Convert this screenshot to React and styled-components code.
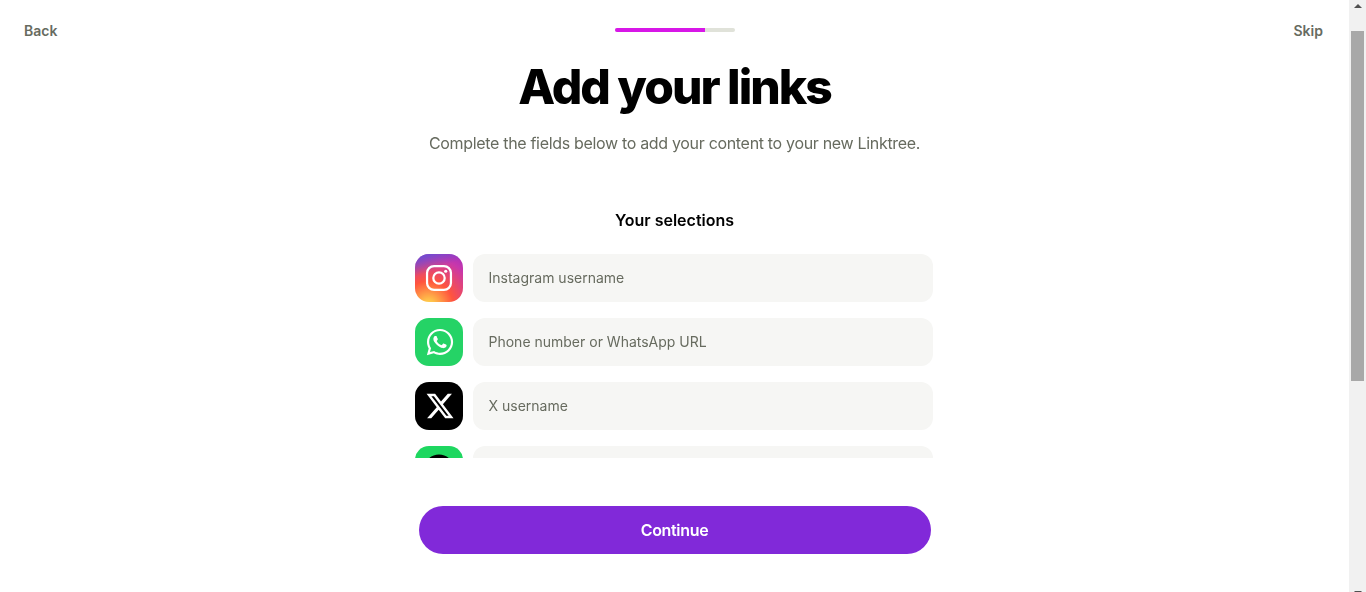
import styled, { createGlobalStyle } from "styled-components";
import { FaWhatsapp, FaXTwitter, FaSpotify } from "react-icons/fa6";

const GlobalStyle = createGlobalStyle`
  html, body {
    margin: 0;
    height: 100%;
    overflow: hidden;
    background: #fff;
    font-family: Inter, "Liberation Sans", sans-serif;
  }
  * { box-sizing: border-box; }
`

const Shell = styled.div`
  display: flex;
  height: 592px;
  overflow: hidden;
`

const Main = styled.main`
  flex: 1;
  min-width: 0;
  display: flex;
  flex-direction: column;
  align-items: center;
`

const Header = styled.header`
  align-self: stretch;
  display: grid;
  grid-template-columns: 1fr auto 1fr;
  align-items: center;
  height: 61px;
  padding: 0 26px;
`

const NavLink = styled.a`
  font-size: 14px;
  font-weight: 600;
  color: #676b5f;
  justify-self: ${(p) => (p.$end ? "end" : "start")};
  margin-left: ${(p) => (p.$end ? "0" : "-2px")};
`

const Progress = styled.div`
  width: 120px;
  height: 4px;
  margin-bottom: 1px;
  border-radius: 2px;
  background: #e0e2d9;
  overflow: hidden;
`

const ProgressFill = styled.div`
  width: 75%;
  height: 100%;
  background: #d717e7;
`

// own layer, the text in the reference is grayscale antialiased here
const Content = styled.div`
  align-self: stretch;
  display: flex;
  flex-direction: column;
  align-items: center;
  will-change: transform;
`

const Title = styled.h1`
  margin: 0;
  font-size: 48px;
  line-height: 52px;
  font-weight: 800;
  letter-spacing: -2px;
  color: #000;
`

const Subtitle = styled.p`
  margin: 18px 0 0;
  font-size: 16px;
  line-height: 24px;
  letter-spacing: -0.32px;
  color: #676b5f;
`

const SectionTitle = styled.h2`
  margin: 53px 0 0;
  font-size: 16px;
  line-height: 24px;
  font-weight: 600;
  color: #000;
`

const List = styled.div`
  width: 518px;
  height: 204px;
  margin: 22px 1px 0 0;
  overflow: hidden;
  display: flex;
  flex-direction: column;
  gap: 16px;
`

const Row = styled.div`
  display: flex;
  gap: 10px;
  flex-shrink: 0;
`

const IconTile = styled.div`
  width: 48px;
  height: 48px;
  flex-shrink: 0;
  border-radius: 14px;
  padding-left: ${(p) => p.$shift || 0}px;
  display: flex;
  align-items: center;
  justify-content: center;
  color: ${(p) => p.$color || "#fff"};
  background: ${(p) => p.$bg};
`

const Field = styled.input`
  flex: 1;
  min-width: 0;
  height: 48px;
  border: 0;
  border-radius: 12px;
  padding: 0 16px 2px 15.5px;
  background: #f6f6f4;
  font: 400 14px Inter, "Liberation Sans", sans-serif;
  color: #000;

  &::placeholder {
    color: #676b5f;
    opacity: 1;
  }
`

const ContinueButton = styled.button`
  width: 512px;
  height: 48px;
  margin-top: 48px;
  border: 0;
  border-radius: 24px;
  background: #8129d9;
  color: #fff;
  font: 600 16px Inter, "Liberation Sans", sans-serif;
  letter-spacing: -0.32px;
`

const Scrollbar = styled.div`
  width: 17px;
  flex-shrink: 0;
  display: flex;
  flex-direction: column;
  align-items: center;
  background: #f1f1f1;
`

const ArrowUp = styled.div`
  margin-top: 4px;
  border-left: 4px solid transparent;
  border-right: 4px solid transparent;
  border-bottom: 4px solid #505050;
`

const Thumb = styled.div`
  width: 13px;
  height: 350px;
  margin-top: 23px;
  background: #a8a8a8;
`

const ArrowDown = styled.div`
  margin-top: auto;
  margin-bottom: -3px;
  border-left: 4px solid transparent;
  border-right: 4px solid transparent;
  border-top: 4px solid #505050;
`

const instagramBg = `radial-gradient(circle at 28% 108%, #ffdd55 0%, #ffc04a 10%, #ff543e 40%, #c837ab 78%, #a22fc0 100%),
  #c837ab`

function InstagramGlyph() {
  return (
    <svg width="28" height="28" viewBox="0 0 30 30" fill="none" stroke="#fff">
      <rect x="2.2" y="2.2" width="25.6" height="25.6" rx="7.5" strokeWidth="2.4" />
      <circle cx="15" cy="15" r="6.1" strokeWidth="2.4" />
      <circle cx="22.2" cy="7.8" r="1.7" fill="#fff" stroke="none" />
    </svg>
  )
}

const InstagramTile = styled(IconTile)`
  position: relative;
  overflow: hidden;

  &::before {
    content: "";
    position: absolute;
    inset: 0;
    background: linear-gradient(160deg, #5b51d8 0%, rgba(91, 81, 216, 0) 35%);
  }

  svg {
    position: relative;
  }
`

export default function App() {
  return (
    <Shell>
      <GlobalStyle />
      <Main>
        <Header>
          <NavLink>Back</NavLink>
          <Progress>
            <ProgressFill />
          </Progress>
          <NavLink $end>Skip</NavLink>
        </Header>
        <Content>
          <Title>Add your links</Title>
          <Subtitle>Complete the fields below to add your content to your new Linktree.</Subtitle>
          <SectionTitle>Your selections</SectionTitle>
          <List>
            <Row>
              <InstagramTile $bg={instagramBg}>
                <InstagramGlyph />
              </InstagramTile>
              <Field placeholder="Instagram username" />
            </Row>
            <Row>
              <IconTile $bg="#25d366" $shift={2}>
                <FaWhatsapp size={30} />
              </IconTile>
              <Field placeholder="Phone number or WhatsApp URL" />
            </Row>
            <Row>
              <IconTile $bg="#000" $shift={1}>
                <FaXTwitter size={30} />
              </IconTile>
              <Field placeholder="X username" />
            </Row>
            <Row>
              <IconTile $bg="#1ed760" $color="#000">
                <FaSpotify size={32} />
              </IconTile>
              <Field />
            </Row>
          </List>
          <ContinueButton>Continue</ContinueButton>
        </Content>
      </Main>
      <Scrollbar>
        <ArrowUp />
        <Thumb />
        <ArrowDown />
      </Scrollbar>
    </Shell>
  )
}
